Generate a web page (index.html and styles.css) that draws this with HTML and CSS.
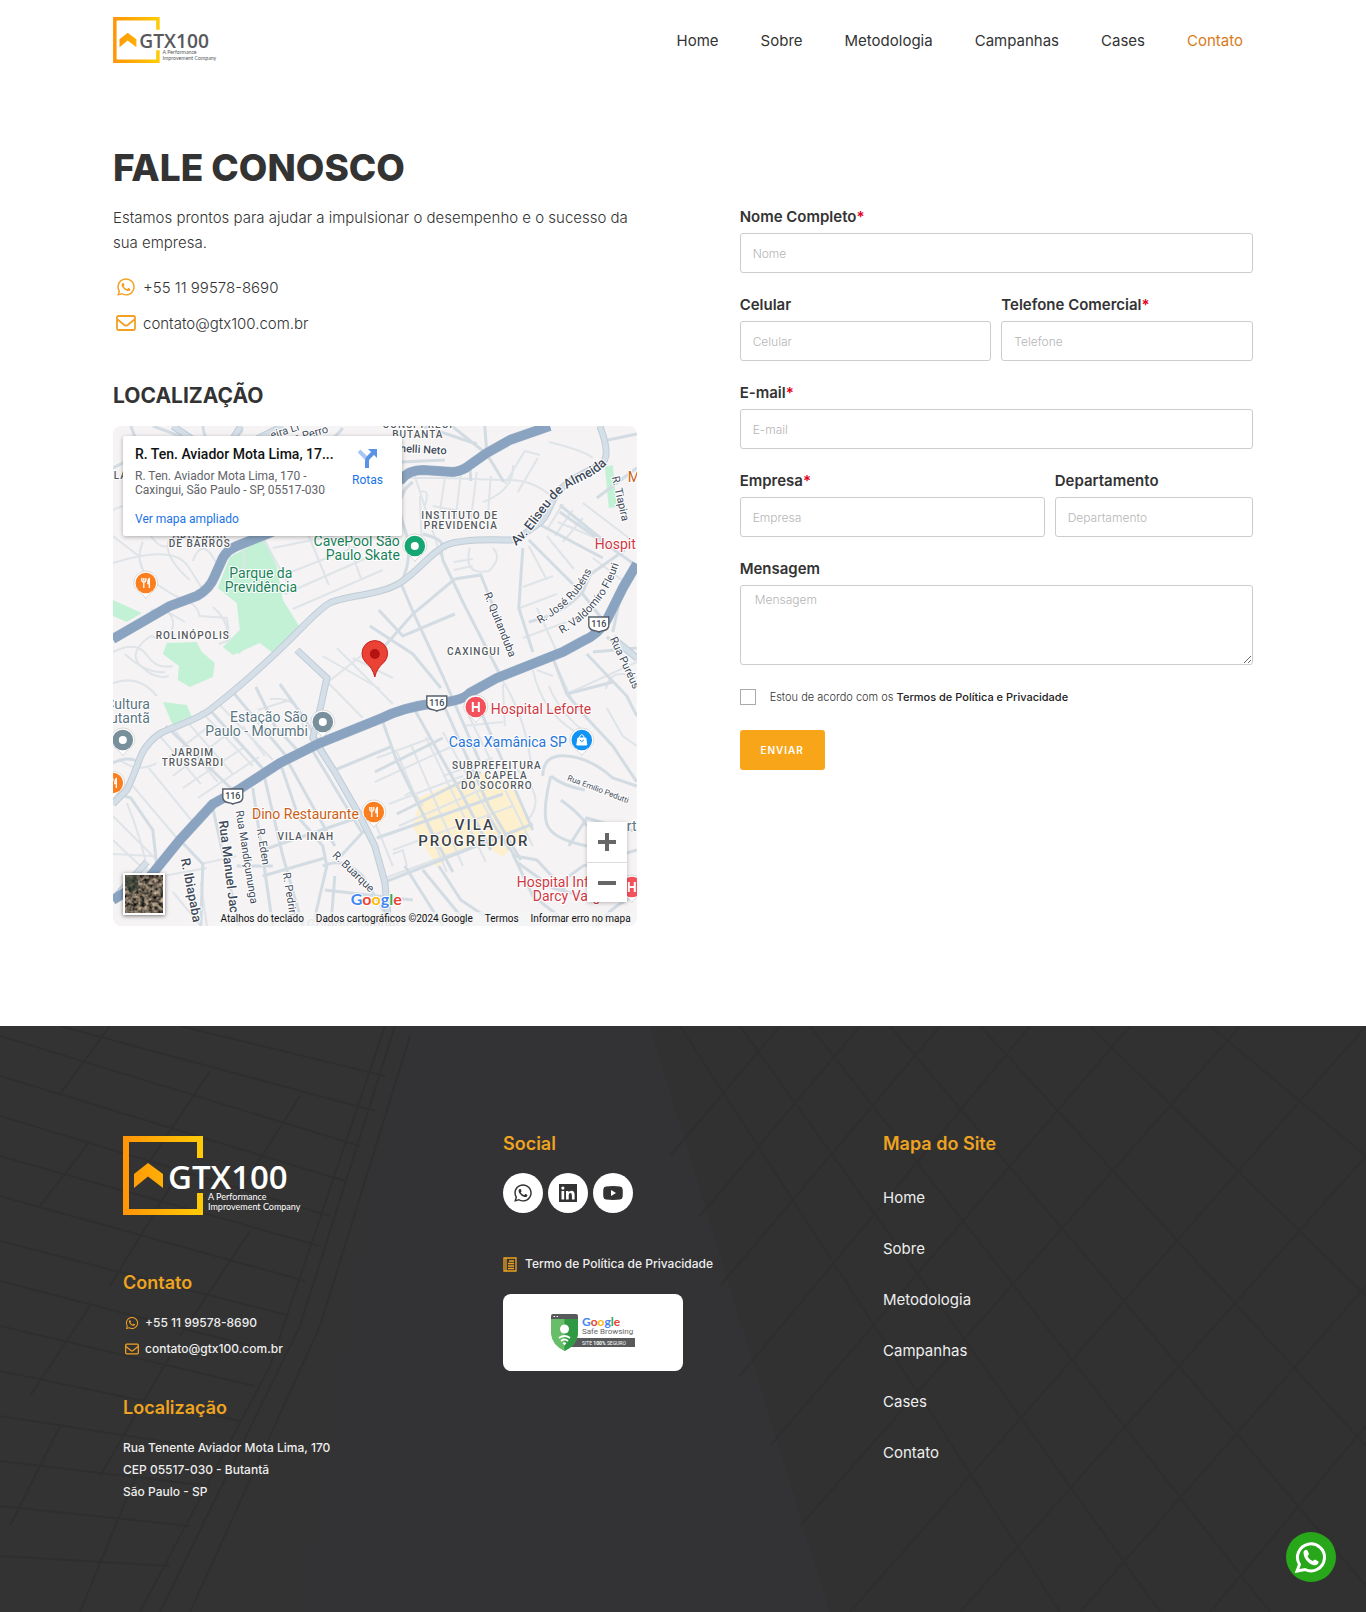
FILE: index.html
```html
<!DOCTYPE html>
<html lang="pt-BR">
<head>
<meta charset="utf-8">
<meta name="viewport" content="width=device-width, initial-scale=1">
<title>Contato | GTX100</title>
<link rel="stylesheet" href="styles.css">
</head>
<body>
<svg class="defs" width="0" height="0" aria-hidden="true">
  <defs>
    <linearGradient id="gold" x1="0" x2="80" y1="0" y2="0" gradientUnits="userSpaceOnUse"><stop offset="0" stop-color="#ff9408"/><stop offset="1" stop-color="#ffcb05"/></linearGradient>
    <symbol id="logo" viewBox="0 0 180 79">
      <path fill="url(#gold)" d="M0 0H80V22H74V6H6V73H74V57H80V79H0Z"/>
      <path fill="url(#gold)" d="M11 38 25 27 40 38V52L25 40.500 11 52Z"/>
      <text class="logo-name" x="45" y="53">GTX100</text>
      <text class="logo-tag" x="85" y="64">A Performance</text>
      <text class="logo-tag" x="85" y="74">Improvement Company</text>
    </symbol>
    <symbol id="whatsapp" viewBox="0 0 448 512"><path fill="currentColor" d="M380.900 97.100C339 55.100 283.200 32 223.900 32c-122.400 0-222 99.600-222 222 0 39.100 10.200 77.300 29.600 111L0 480l117.700-30.900c32.400 17.700 68.900 27 106.100 27h.1c122.300 0 224.100-99.600 224.100-222 0-59.300-25.200-115-67.100-157zm-157 341.600c-33.200 0-65.700-8.900-94-25.700l-6.700-4-69.800 18.300L72 359.200l-4.400-7c-18.500-29.400-28.200-63.300-28.200-98.200 0-101.700 82.800-184.500 184.600-184.500 49.300 0 95.600 19.200 130.400 54.100 34.800 34.900 56.200 81.200 56.100 130.500 0 101.800-84.900 184.600-186.600 184.600zm101.200-138.200c-5.500-2.800-32.800-16.200-37.900-18-5.100-1.900-8.800-2.800-12.500 2.800-3.700 5.600-14.300 18-17.600 21.800-3.200 3.700-6.500 4.200-12 1.400-32.600-16.300-54-29.100-75.500-66-5.700-9.800 5.700-9.100 16.300-30.300 1.800-3.700.9-6.900-.5-9.700-1.400-2.800-12.500-30.100-17.100-41.200-4.500-10.800-9.100-9.300-12.500-9.500-3.200-.2-6.900-.2-10.600-.2-3.700 0-9.700 1.400-14.800 6.900-5.100 5.600-19.400 19-19.400 46.300 0 27.300 19.900 53.700 22.600 57.400 2.800 3.700 39.100 59.700 94.800 83.800 35.200 15.200 49 16.500 66.600 13.900 10.700-1.600 32.800-13.400 37.400-26.400 4.600-13 4.600-24.100 3.200-26.400-1.300-2.500-5-3.900-10.500-6.600z"/></symbol>
    <symbol id="mail" viewBox="0 0 20 16"><rect x="1" y="1" width="18" height="14" rx="1.500" fill="none" stroke="currentColor" stroke-width="1.800"/><path d="M1.500 4.500 8.300 10c1.200.9 2.200.9 3.400 0l6.800-5.500" fill="none" stroke="currentColor" stroke-width="1.800"/></symbol>
    <symbol id="shield" viewBox="0 0 22 17"><path d="M1 1H21V10Q20 14 16 14.500 13 15 11 16 9 15 6 14.500 2 14 1 10Z" fill="#fff" stroke="#555e68" stroke-width="1.400"/><text class="shield-number" x="11" y="11">116</text></symbol>
    <symbol id="pin" viewBox="0 0 26 30"><path d="M13 1a12 12 0 0 1 12 12c0 7-8 9-12 15.500C9 22 1 20 1 13A12 12 0 0 1 13 1Z" fill="#fff" stroke="#bbb" stroke-width=".5"/><circle cx="13" cy="13" r="10.300" fill="currentColor"/></symbol>
    <symbol id="fork" viewBox="0 0 12 12"><path d="M2 1V4M4 1V4M6 1V4M2 4Q4 6.500 6 4M4 5V11M9.500 11V1.500C8 2 8 5 8 6.500H9.500" fill="none" stroke="#fff" stroke-width="1.300"/></symbol>
  </defs>
</svg>

<header class="header">
  <div class="container header-bar">
    <a class="logo-link" href="#" aria-label="GTX100"><svg class="logo logo-small"><use href="#logo"/></svg></a>
    <nav class="nav">
      <a href="#">Home</a><a href="#">Sobre</a><a href="#">Metodologia</a><a href="#">Campanhas</a><a href="#">Cases</a><a class="active" href="#">Contato</a>
    </nav>
  </div>
</header>

<main class="container contact">
  <h1>FALE CONOSCO</h1>
  <section class="info">
    <p>Estamos prontos para ajudar a impulsionar o desempenho e o sucesso da sua empresa.</p>
    <ul class="contact-list">
      <li><svg class="icon"><use href="#whatsapp"/></svg><a href="#">+55 11 99578-8690</a></li>
      <li><svg class="icon"><use href="#mail"/></svg><a href="#">contato@gtx100.com.br</a></li>
    </ul>
    <h2>LOCALIZAÇÃO</h2>
    <div class="map">
      <svg class="map-canvas" viewBox="0 0 524 500" preserveAspectRatio="xMidYMid slice" role="img" aria-label="Mapa">
        <defs>
          <path id="way-eliseu" d="M403 120C426 101 436 74 454 63S482 52 500 32"/>
          <path id="way-jose" d="M427 198C448 186 470 168 480 142"/>
          <path id="way-valdomiro" d="M449 208C477 192 500 166 508 130"/>
        </defs>
        <rect width="524" height="500" fill="#f5f3f4"/>
        <g fill="#c3f1d5">
          <path d="M117 131 152 112 164 141 170 174 187 201 160 227 147 217 120 229 110 221 127 204 124 177 105 162Z"/>
          <path d="M0 174 29 187 14 196 0 190Z"/>
          <path d="M54 217 84 216 89 226 102 237 100 251 77 261 65 254 66 240 50 228Z"/>
          <path d="M50 276 74 279 79 291 60 299Z"/><path d="M118 224 131 222 127 228Z"/>
          <path d="M492 41 500 39 504 81 496 82Z"/>
        </g>
        <path fill="#fdf0cf" d="M307 371 370 346 397 357 420 401 390 431 370 418 347 424 324 441 300 401Z"/>
        <g class="road-thin">
          <path d="M0 84Q30 70 50 82T64 112Q52 130 38 110T14 104M0 137Q60 118 75 140L93 168M30 116Q20 140 40 155T70 173M57 112Q48 128 77 154M80 135Q90 108 105 140M0 110 26 130 34 157"/>
          <path d="M38 184Q62 182 60 200T38 210Q14 226 28 240T56 250M64 177Q82 172 87 190L114 192 117 214 106 218M100 181Q118 196 114 215M52 184 72 196M0 226Q24 214 34 229T60 240M0 257Q26 248 44 270M12 228Q34 248 52 246"/>
          <path d="M121 128Q130 116 132 132T117 142M151 113 179 165M196 110 216 159M232 108 248 152M168 150 245 120M172 168 256 131M180 183 270 144M219 110 260 104M160 122 230 108"/>
          <path d="M300 44 328 130M332 52 326 94M348 48 342 99M364 46 357 103M378 50 374 104M288 52 332 52 388 54Q420 52 440 72M307 66Q318 62 312 80M307 70 309 118M320 80 358 87M357 122Q350 150 376 145 390 132 380 122M341 136 360 133M341 144 360 140M400 39Q402 64 370 76M412 25 392 58M425 32 405 66M412 25 427 29M436 16Q470 24 480 32"/>
          <path d="M416 120 434 154M434 110 461 143M442 75 424 102M450 78 434 104M460 84 442 110M470 92 450 116M445 96 512 124M410 161 440 150M407 182 444 168M424 182 446 230M410 212 470 190M480 132 517 160M470 77 520 115"/>
          <path d="M6 333Q24 348 44 337M47 310 88 358M58 300 105 356M71 292 120 348M88 285 140 340M106 278 160 334M50 336 94 302M60 350 112 310M70 362 130 322M85 372 146 331M20 360 64 412M36 342 80 396M0 390 46 436M0 414 34 446M14 377Q28 410 36 450"/>
          <path d="M157 273Q190 270 190 302M145 284 177 274M210 230 267 263M197 238 250 292M224 222 280 278M214 257 258 222M240 232 280 252M0 428 40 430M50 450 94 442M88 438 124 430M60 466 88 500M88 456 94 500M130 300 152 330"/>
          <path d="M264 332 318 312M262 356 340 320M276 378 350 350M286 400 372 362M280 424 400 380M272 452 410 402M284 326 334 446M298 318 350 440M313 311 373 436M330 306 396 424M356 290 420 420M292 370Q300 360 310 380M280 428 290 424 294 440M262 396 280 440M330 350 380 332M350 300 390 296"/>
          <path d="M420 244Q430 290 470 310M436 260Q448 290 480 312M440 232 460 276M390 255Q412 290 418 336M390 258 392 300M400 340Q436 370 415 394M424 244 440 250M454 268 524 236M493 263Q498 240 524 252M494 282 510 310 524 320"/>
        </g>
        <g class="road">
          <path d="M0 42 20 32 28 18 70 12 102 36 130 4M24 16 18 0M40 0 78 14M90 0Q92 20 112 30M166 0Q150 16 180 22T230 2"/>
          <path d="M339 0 374 28 391 56M310 0 364 18M357 39 358 55M374 28 372 0M289 36 332 34M300 56Q280 70 291 100T288 157M310 108Q334 114 328 122L330 134 352 180 390 254M288 157 302 190 330 250 368 338"/>
          <path d="M342 153 368 149 400 230M342 153 300 188 258 236M257 200 300 228 328 262M266 184 290 210 342 188M410 122 406 182 420 226M416 114 470 168 490 194M424 97 490 132M416 196Q450 188 470 166L478 148 512 124M447 79 490 114M447 86 510 130 524 140M440 72 424 97M484 72 524 42M495 14 524 8M510 160 500 206"/>
          <path d="M0 337Q14 330 24 335M53 300 120 364M97 284 154 347M120 266 176 333M143 261 162 300 190 330M167 258 190 290 224 346M0 366 18 372 40 404 44 440M44 438 70 412M67 414 90 438 88 500M100 382 126 500M140 362 160 500M150 344 170 430 190 500M167 336 186 392 210 420 214 440 200 500"/>
          <path d="M172 330 222 420M200 325 250 408M222 344 280 320M150 424 250 390M150 450 212 432M124 440 160 440M210 440Q230 430 250 450L280 500M218 500 222 450M252 404 228 430M270 296 284 335 320 408 340 446M302 284 350 370 378 424M330 277 376 380 408 434M355 268 370 290 420 404M262 346 330 312M284 388 368 346M264 412 390 368M272 456 420 398M326 440 348 474 372 490"/>
          <path d="M440 232 454 268 474 292 500 320 524 356M454 268 500 256M474 228 514 270 524 290M494 211 524 234M480 226 524 222M430 350Q430 328 454 330T500 352L524 360M438 350Q450 360 472 364M438 350Q428 390 436 402T474 420M448 374Q470 390 474 400M456 420 474 392 520 405M400 428 420 470 446 490M404 436 440 462 470 470M375 390 402 430 424 434 452 464M440 462 470 440 524 424M484 500Q500 478 524 470M292 440 330 500M310 444 356 500M212 464 300 474"/>
        </g>
        <g id="avenues">
          <path class="avenue-edge" d="M487 0C494 18 497 34 487 39S458 52 447 64 436 92 424 99 408 114 397 114 350 112 334 119 306 145 287 157 230 170 217 177 190 202 160 230 110 274 97 284 58 302 50 306 32 320 28 330 20 352 14 364L0 378M184 224 214 252 208 280 200 312 222 346 246 388 262 420 272 456 276 500M108 32 128 0M104 30 60 0M500 212 524 232M130 20 170 0M0 474 34 436"/>
          <path class="avenue" d="M487 0C494 18 497 34 487 39S458 52 447 64 436 92 424 99 408 114 397 114 350 112 334 119 306 145 287 157 230 170 217 177 190 202 160 230 110 274 97 284 58 302 50 306 32 320 28 330 20 352 14 364L0 378M184 224 214 252 208 280 200 312 222 346 246 388 262 420 272 456 276 500M108 32 128 0M104 30 60 0M500 212 524 232M130 20 170 0M0 474 34 436"/>
        </g>
        <g class="highway-edge"><path d="M0 213 57 180 84 170Q97 163 102 150L110 132Q114 124 124 120L154 108 289 53Q296 44 310 44L340 46Q350 45 357 39L374 27 397 14 437 0"/><path d="M0 474 37 451 67 414 100 378 127 363 167 337 207 317 267 293Q290 281 324 277 350 275 357 267L384 252 450 226 470 215Q485 209 494 194L510 162 524 138"/></g>
        <g class="highway"><path d="M0 213 57 180 84 170Q97 163 102 150L110 132Q114 124 124 120L154 108 289 53Q296 44 310 44L340 46Q350 45 357 39L374 27 397 14 437 0"/><path d="M0 474 37 451 67 414 100 378 127 363 167 337 207 317 267 293Q290 281 324 277 350 275 357 267L384 252 450 226 470 215Q485 209 494 194L510 162 524 138"/></g>
        <g class="street">
          <text transform="translate(159 13) rotate(-18)">eira Li</text>
          <text transform="translate(182 16) rotate(-16)">o Perro</text>
          <text class="street-bold" transform="translate(287 26) rotate(3)">nelli Neto</text>
          <text class="street-major"><textPath href="#way-eliseu">Av. Eliseu de Almeida</textPath></text>
          <text><textPath href="#way-jose">R. José Rubéns</textPath></text>
          <text><textPath href="#way-valdomiro">R. Valdomiro Fleuri</textPath></text>
          <text transform="translate(499 51) rotate(77)">R. Tiapira</text>
          <text transform="translate(497 213) rotate(65)">Rua Puréus</text>
          <text transform="translate(371 168) rotate(68)">R. Quitanduba</text>
          <text class="street-major" transform="translate(106 395) rotate(83)">Rua Manuel Jac</text>
          <text transform="translate(123 385) rotate(81)">Rua Mandiçununga</text>
          <text transform="translate(144 403) rotate(81)">R. Eden</text>
          <text class="street-major" transform="translate(68 433) rotate(79)">R. Ibiapaba</text>
          <text transform="translate(170 447) rotate(81)">R. Pedrin</text>
          <text transform="translate(219 430) rotate(44)">R. Buarque</text>
          <text class="street-minor" transform="translate(454 354) rotate(21)">Rua Emilio Pedutti</text>
        </g>
        <g class="district">
          <text x="305" y="2">CONSI PRECI</text><text x="305" y="12">BUTANTA</text>
          <text x="8" y="53">LA</text><text x="87" y="112">ADHEMAR</text><text x="87" y="121">DE BARROS</text>
          <text x="347" y="93">INSTITUTO DE</text><text x="348" y="103">PREVIDENCIA</text>
          <text x="80" y="213">ROLINÓPOLIS</text><text x="361" y="229">CAXINGUI</text>
          <text x="80" y="330">JARDIM</text><text x="80" y="340">TRUSSARDI</text>
          <text x="384" y="343">SUBPREFEITURA</text><text x="384" y="353">DA CAPELA</text><text x="384" y="363">DO SOCORRO</text>
          <text x="193" y="414">VILA INAH</text>
          <text class="district-major" x="362" y="404">VILA</text><text class="district-major" x="361" y="420">PROGREDIOR</text>
        </g>
        <g class="place">
          <g fill="#188159"><text x="148" y="152" text-anchor="middle">Parque da</text><text x="148" y="166" text-anchor="middle">Previdência</text><text x="287" y="120" text-anchor="end">CavePool São</text><text x="287" y="134" text-anchor="end">Paulo Skate</text></g>
          <g fill="#5a7582"><text x="37" y="283" text-anchor="end">Cultura</text><text x="37" y="297" text-anchor="end">Butantã</text><text x="195" y="296" text-anchor="end">Estação São</text><text x="195" y="310" text-anchor="end">Paulo - Morumbi</text><text x="514" y="405">rt</text></g>
          <g fill="#cb6016"><text x="246" y="393" text-anchor="end">Dino Restaurante</text><text x="515" y="56">M</text></g>
          <g fill="#cf3843"><text x="482" y="123">Hospit</text><text x="378" y="288">Hospital Leforte</text><text x="404" y="461">Hospital Inf</text><text x="420" y="475">Darcy Vargas</text></g>
          <text x="454" y="321" text-anchor="end" fill="#2674d8">Casa Xamânica SP</text>
          <text x="240" y="504" text-anchor="middle" fill="#b7bcc3">Colégio Miguel</text>
        </g>
        <use href="#shield" x="475" y="190" width="22" height="17"/><use href="#shield" x="313" y="269" width="22" height="17"/><use href="#shield" x="109" y="362" width="22" height="17"/>
        <g color="#16a673"><use href="#pin" x="289" y="107" width="26" height="30"/></g><circle cx="302" cy="120" r="4" fill="#fff"/>
        <g color="#78909c"><use href="#pin" x="-3" y="301" width="26" height="30"/><use href="#pin" x="197" y="283" width="26" height="30"/></g><circle cx="10" cy="314" r="4" fill="#fff"/><circle cx="210" cy="296" r="4" fill="#fff"/>
        <g color="#fb7f1f"><use href="#pin" x="20" y="144" width="26" height="30"/><use href="#pin" x="-13" y="344" width="26" height="30"/><use href="#pin" x="248" y="373" width="26" height="30"/></g>
        <use href="#fork" x="27" y="151" width="12" height="12"/><use href="#fork" x="-6" y="351" width="12" height="12"/><use href="#fork" x="255" y="380" width="12" height="12"/>
        <g color="#f4515c"><use href="#pin" x="350" y="268" width="26" height="30"/><use href="#pin" x="506" y="448" width="26" height="30"/></g>
        <path d="M360 276V286M366 276V286M360 281H366M516 456V466M522 456V466M516 461H522" stroke="#fff" stroke-width="2"/>
        <g color="#1192f5"><use href="#pin" x="456" y="301" width="26" height="30"/></g><path d="M465 312H473L474 319H464Z" fill="#fff" stroke="#fff"/><path d="M467 312V310Q469 307 471 310V312" fill="none" stroke="#fff"/><path d="M467 314Q469 317 471 314" fill="none" stroke="#1192f5"/>
        <path d="M262 251Q260 242 253 236.500A12.800 12.800 0 1 1 271 236.500Q264 242 262 251Z" fill="#ea4335" stroke="#c5221f"/><circle cx="262" cy="228" r="5" fill="#b31412"/>
        <text class="google" x="238" y="479"><tspan fill="#4285f4">G</tspan><tspan fill="#ea4335">o</tspan><tspan fill="#fbbc05">o</tspan><tspan fill="#4285f4">g</tspan><tspan fill="#34a853">l</tspan><tspan fill="#ea4335">e</tspan></text>
      </svg>
      <div class="map-card">
        <div class="map-address"><strong>R. Ten. Aviador Mota Lima, 17...</strong><span>R. Ten. Aviador Mota Lima, 170 - Caxingui, São Paulo - SP, 05517-030</span><a href="#">Ver mapa ampliado</a></div>
        <a class="routes" href="#"><svg width="20" height="20" viewBox="0 0 20 20"><path d="M1 2 9 10" stroke="#a9c7f4" stroke-width="4"/><path d="M9 19V12Q9 10 11 8L15 4" fill="none" stroke="#5a93e6" stroke-width="4"/><path d="M10 0H19V9L16 6 13 3Z" fill="#5a93e6"/></svg>Rotas</a>
      </div>
      <button class="satellite" type="button" aria-label="Satélite"><svg width="38" height="38"><filter id="terrain" x="0" y="0" width="1" height="1" color-interpolation-filters="sRGB"><feTurbulence type="fractalNoise" baseFrequency=".25" numOctaves="4" seed="8"/><feColorMatrix values="1.200 0 0 0 -.17  1.050 0 0 0 -.14  .9 0 0 0 -.12  0 0 0 0 1"/></filter><rect width="38" height="38" filter="url(#terrain)"/><path d="M0 0H12L14 14 6 18 0 10Z" fill="#29382e" opacity=".6"/></svg></button>
      <div class="map-zoom">
        <button type="button" aria-label="Aumentar"><svg width="18" height="18"><path d="M9 0V18M0 9H18" stroke="#666" stroke-width="4"/></svg></button>
        <button type="button" aria-label="Diminuir"><svg width="18" height="18"><path d="M0 9H18" stroke="#666" stroke-width="4"/></svg></button>
      </div>
      <div class="map-credits"><span>Atalhos do teclado</span><span>Dados cartográficos ©2024 Google</span><a href="#">Termos</a><a href="#">Informar erro no mapa</a></div>
    </div>
  </section>

  <form class="form">
    <div class="field"><label for="nome">Nome Completo<b>*</b></label><input id="nome" type="text" placeholder="Nome"></div>
    <div class="row even">
      <div class="field"><label for="celular">Celular</label><input id="celular" type="tel" placeholder="Celular"></div>
      <div class="field"><label for="telefone">Telefone Comercial<b>*</b></label><input id="telefone" type="tel" placeholder="Telefone"></div>
    </div>
    <div class="field"><label for="email">E-mail<b>*</b></label><input id="email" type="email" placeholder="E-mail"></div>
    <div class="row wide">
      <div class="field"><label for="empresa">Empresa<b>*</b></label><input id="empresa" type="text" placeholder="Empresa"></div>
      <div class="field"><label for="departamento">Departamento</label><input id="departamento" type="text" placeholder="Departamento"></div>
    </div>
    <div class="field"><label for="mensagem">Mensagem</label><textarea id="mensagem" placeholder="Mensagem"></textarea></div>
    <div class="agree"><input id="termos" type="checkbox"><label for="termos">Estou de acordo com os <a href="#">Termos de Política e Privacidade</a></label></div>
    <button class="submit" type="submit">ENVIAR</button>
  </form>
</main>

<footer class="footer">
  <svg class="footer-art" viewBox="0 0 1366 586" preserveAspectRatio="xMidYMid slice" aria-hidden="true">
    <path d="M400 0H650L830 586H300Z" fill="#35353a" opacity=".35"/>
    <g fill="none" stroke="#2b2b2b" stroke-width="2" opacity=".5">
      <path d="M0 10 360 120M0 50 345 155M0 90 330 190M0 130 320 220M0 170 305 255M0 215 290 290M0 255 270 325M0 300 255 360M0 345 240 395M0 390 225 425M0 435 210 460M0 480 190 500M0 530 170 540M60 0 375 85M180 0 385 50"/>
      <path d="M110 0 60 68M210 45 150 135M300 70 230 180M90 115 40 180M180 145 110 260M250 205 180 310M90 280 30 370M170 330 100 450M60 400 10 500M140 440 80 586"/>
      <path d="M395 0 300 300 160 586M385 0 270 340 140 586M410 10 320 300 190 586"/>
      <path d="M680 0 1060 586M740 0 1160 586M810 0 1270 586M890 0 1366 560M980 0 1366 420M1090 0 1366 270M1210 0 1366 130M1366 0 850 586M1366 130 960 586M1366 260 1080 586M1366 400 1210 586M1240 0 800 500M1130 0 770 420M1030 0 740 350M940 0 720 260M860 0 700 190M780 0 670 130"/>
    </g>
    <path d="M650 0H1366V586H830Z" fill="#2d2d2d" opacity=".25"/>
  </svg>
  <div class="container footer-grid">
    <div>
      <a class="footer-logo" href="#" aria-label="GTX100"><svg class="logo logo-large"><use href="#logo"/></svg></a>
      <h3>Contato</h3>
      <ul class="footer-contact">
        <li><svg class="icon"><use href="#whatsapp"/></svg><a href="#">+55 11 99578-8690</a></li>
        <li><svg class="icon"><use href="#mail"/></svg><a href="#">contato@gtx100.com.br</a></li>
      </ul>
      <h3>Localização</h3>
      <address>Rua Tenente Aviador Mota Lima, 170<br>CEP 05517-030 - Butantã<br>São Paulo - SP</address>
    </div>
    <div>
      <h3>Social</h3>
      <div class="social">
        <a href="#" aria-label="WhatsApp"><svg width="18" height="20"><use href="#whatsapp"/></svg></a>
        <a href="#" aria-label="LinkedIn"><svg width="18" height="18" viewBox="0 0 18 18"><path fill="#333" d="M0 0H18V18H0Z"/><path fill="#fff" d="M2.500 7H5.200V15.500H2.500ZM7 7H9.500V8.200Q10.500 6.700 12.300 6.700C15 6.700 15.600 8.400 15.600 11V15.500H12.900V11.400Q12.900 9.100 11.400 9.100 9.700 9.100 9.700 11.300V15.500H7Z"/><circle cx="3.850" cy="4.100" r="1.600" fill="#fff"/></svg></a>
        <a href="#" aria-label="YouTube"><svg width="20" height="14" viewBox="0 0 20 14"><path fill="#333" d="M3 .4Q10-.3 17 .4 19.400.6 19.600 3 20 7 19.600 11 19.400 13.400 17 13.600 10 14.300 3 13.600.6 13.400.4 11 0 7 .4 3 .6.600 3 .4Z"/><path fill="#fff" d="M8 4 13 7 8 10Z"/></svg></a>
      </div>
      <a class="policy" href="#"><svg width="14" height="15" viewBox="0 0 14 15"><path d="M1 1H13V14H1ZM3 1V14M6 4H11M5 6.500H11M5 9H11M5 11.500H11" fill="none" stroke="currentColor" stroke-width="1.300"/></svg>Termo de Política de Privacidade</a>
      <a class="safe" href="#">
        <svg width="84" height="38" viewBox="0 0 84 38"><path d="M18 24H84V33H18Z" fill="#58595b"/><path d="M0 5H27V20Q26 31 13.500 37 1 31 0 20Z" fill="#67bd68"/><path d="M13.500 5H27V20Q26 31 13.500 37Z" fill="#2f9a43"/><path d="M0 5V2Q0 0 2 0H25Q27 0 27 2V5Z" fill="#58595b"/><path d="M2.500 2.500H4M5.500 2.500H7" stroke="#fff"/><circle cx="13.500" cy="15" r="4.500" fill="#fff"/><path d="M8 24Q13.500 20 19 24M10 27Q13.500 24 17 27" fill="none" stroke="#fff" stroke-width="1.800"/><path d="M11.500 29Q13.500 27.500 15.500 29L13.500 31.500Z" fill="#fff"/><text class="safe-google" x="31" y="12"><tspan fill="#4285f4">G</tspan><tspan fill="#ea4335">o</tspan><tspan fill="#fbbc05">o</tspan><tspan fill="#4285f4">g</tspan><tspan fill="#34a853">l</tspan><tspan fill="#ea4335">e</tspan></text><text class="safe-name" x="31" y="20">Safe Browsing</text><text class="safe-note" x="31" y="31">SITE <tspan font-weight="700">100%</tspan> SEGURO</text></svg>
      </a>
    </div>
    <div>
      <h3>Mapa do Site</h3>
      <nav class="site-map"><a href="#">Home</a><a href="#">Sobre</a><a href="#">Metodologia</a><a href="#">Campanhas</a><a href="#">Cases</a><a href="#">Contato</a></nav>
    </div>
  </div>
</footer>
<a class="float-chat" href="#" aria-label="Fale pelo WhatsApp"><svg viewBox="0 0 32 32" width="32" height="32"><path d="M2 30 4.500 23.500A13.500 13.500 0 1 1 10 28.500Z" fill="none" stroke="#fff" stroke-width="3"/><path d="M8.500 11.500C9 8.500 11.500 8 12.500 9.500L14 13 12.500 15.500Q14 18.500 17.500 20L20 18.500 23.500 20.500C24 23.500 20.500 25 18 24 13 22.500 8.500 17 8.500 11.500Z" fill="#fff"/></svg></a>
</body>
</html>
```
FILE: styles.css
```css
* { box-sizing: border-box; }
body { margin: 0; background: #fff; color: #333; font-family: Inter, "Open Sans", sans-serif; font-size: 15px; }
a { color: inherit; text-decoration: none; }
ul { margin: 0; padding: 0; list-style: none; }
button { padding: 0; border: 0; font-family: inherit; cursor: pointer; }
svg { display: block; }
.defs { position: absolute; }
.container { width: 100%; max-width: 1140px; margin: 0 auto; }

.header-bar { display: flex; align-items: center; justify-content: space-between; min-height: 80px; padding-right: 10px; }
.nav { display: flex; gap: 42px; }
.nav .active { color: #d97b1c; }
.logo-small { width: 105px; height: 46px; color: #58595b; }
.logo-large { width: 180px; height: 79px; color: #fff; }
.logo-name { font: 600 33px "Open Sans", sans-serif; fill: currentColor; }
.logo-tag { font: 400 9px Lato, sans-serif; fill: currentColor; }

.contact { display: grid; grid-template-columns: 51fr 50fr; column-gap: 103px; padding: 66px 0 100px; }
h1 { grid-column: 1 / -1; margin: 0 0 15px; font-size: 37px; font-weight: 800; line-height: 44px; }
h2 { margin: 49px 0 18px; font-size: 21px; font-weight: 700; line-height: 24px; }
.info p { margin: 0; font-weight: 300; line-height: 25px; }
.contact-list { display: grid; gap: 12px; margin-top: 20px; font-weight: 300; }
.contact-list li { display: flex; align-items: center; gap: 7px; height: 24px; padding-left: 3px; }
.icon { width: 20px; height: 20px; color: #f2a123; }

.map { position: relative; height: 500px; overflow: hidden; border-radius: 8px; font-family: Roboto, sans-serif; }
.map-canvas { width: 100%; height: 100%; font-family: Roboto, sans-serif; }
.road-thin { fill: none; stroke: #dfe4e8; stroke-width: 2; }
.road { fill: none; stroke: #d3dce3; stroke-width: 3; }
.avenue { fill: none; stroke: #d5dfe8; stroke-width: 5; }
.avenue-edge { fill: none; stroke: #c0ccd6; stroke-width: 7; }
.highway { fill: none; stroke: #89a3c0; stroke-width: 9; }
.highway-edge { fill: none; stroke: #a3b6cb; stroke-width: 10; }
.street { font-size: 11px; fill: #3f4b5b; stroke: #fff; stroke-width: 2px; paint-order: stroke; }
.street-bold { font-weight: 500; }
.street-major { font-size: 13px; font-weight: 500; }
.street-minor { font-size: 8px; }
.district { font-size: 10px; font-weight: 500; letter-spacing: 1px; fill: #555a60; stroke: #fff; stroke-width: 2px; paint-order: stroke; text-anchor: middle; }
.district-major { font-size: 15px; letter-spacing: 2px; fill: #3c4146; }
.place { font-size: 14px; stroke: #fff; stroke-width: 2px; paint-order: stroke; }
.shield-number { font: 500 9px Roboto, sans-serif; text-anchor: middle; fill: #3c4650; }
.google { font: 700 16px Lato, sans-serif; stroke: #fff; stroke-width: 2px; paint-order: stroke; }
.map-card { position: absolute; top: 10px; left: 10px; display: flex; justify-content: space-between; width: 279px; height: 100px; padding: 10px 19px 0 12px; background: #fff; border-radius: 2px; box-shadow: 0 1px 4px rgba(0, 0, 0, .3); font-size: 12px; line-height: 14px; }
.map-address { display: flex; flex-direction: column; width: 200px; }
.map-address strong { font-size: 14px; font-weight: 500; line-height: 16px; color: #111; white-space: nowrap; }
.map-address span { margin-top: 7px; color: #5f6368; }
.map-address a { margin-top: 15px; color: #1a73e8; }
.routes { display: flex; flex-direction: column; align-items: center; gap: 4px; padding-top: 3px; color: #1a73e8; }
.satellite { position: absolute; left: 10px; bottom: 11px; border: 2px solid #fff; box-shadow: 0 1px 4px rgba(0, 0, 0, .5); }
.map-zoom { position: absolute; right: 10px; bottom: 24px; display: grid; width: 40px; background: #fff; box-shadow: 0 1px 4px rgba(0, 0, 0, .25); }
.map-zoom button { display: grid; place-items: center; height: 40px; background: none; }
.map-zoom button + button { border-top: 1px solid #ddd; }
.map-credits { position: absolute; right: 0; bottom: 0; display: flex; gap: 12px; padding: 0 6px; background: rgba(245, 245, 245, .7); color: #111; font-size: 10px; line-height: 14px; }

.form { display: flex; flex-direction: column; align-items: stretch; }
.row { display: grid; gap: 10px; }
.even { grid-template-columns: 1fr 1fr; }
.wide { grid-template-columns: 20fr 13fr; }
.field { display: flex; flex-direction: column; gap: 4px; min-width: 0; margin-bottom: 20px; }
.field label { font-size: 15px; font-weight: 600; line-height: 24px; }
.field b { color: #e3001b; font-weight: 600; }
.field input, .field textarea { width: 100%; height: 40px; padding: 0 12px; border: 1px solid #ccc; border-radius: 3px; background: #fff; font-family: inherit; font-size: 12px; font-weight: 300; }
.field textarea { display: block; height: 80px; padding: 6px 14px; }
::placeholder { color: #b5b5b5; opacity: 1; }
.agree { display: flex; align-items: center; gap: 14px; margin: 4px 0 25px; font-size: 11px; font-weight: 300; line-height: 16px; }
.agree input { appearance: none; width: 16px; height: 16px; margin: 0; border: 1px solid #aaa; background: #fff; }
.agree a { font-weight: 500; color: #222; }
.submit { align-self: flex-start; width: 85px; height: 40px; border-radius: 3px; background: #f9a51a; color: #fff; font-size: 10px; font-weight: 600; letter-spacing: 1px; }

.footer { position: relative; padding: 106px 0 109px; overflow: hidden; background: #333; color: #eee; }
.footer-art { position: absolute; inset: 0; width: 100%; height: 100%; }
.footer-grid { position: relative; display: grid; grid-template-columns: repeat(3, 1fr); }
.footer-grid > div { padding: 0 10px; }
.footer h3 { margin: 0; color: #eea320; font-size: 18px; font-weight: 600; line-height: 24px; }
.footer-logo { display: block; margin: 4px 0 56px; }
.footer-contact { margin: 15px 0 34px; font-size: 12px; font-weight: 500; line-height: 26px; }
.footer-contact li { display: flex; align-items: center; gap: 6px; padding-left: 2px; }
.footer-contact .icon { width: 14px; height: 14px; }
address { margin-top: 17px; font-size: 12px; font-style: normal; font-weight: 500; line-height: 22px; }
.social { display: flex; gap: 5px; margin-top: 17px; }
.social a { display: grid; place-items: center; width: 40px; height: 40px; border-radius: 50%; background: #fff; color: #333; }
.policy { display: flex; align-items: center; gap: 8px; margin: 41px 0 20px; font-size: 12px; font-weight: 500; line-height: 20px; }
.policy svg { color: #eea320; }
.safe { display: grid; place-items: center; width: 180px; height: 77px; border-radius: 8px; background: #fff; }
.safe-google { font: 700 12px Lato, sans-serif; }
.safe-name { font: 400 8px Roboto, sans-serif; fill: #666; }
.safe-note { font: 400 5px Roboto, sans-serif; fill: #fff; }
.site-map { display: grid; margin-top: 16px; font-size: 15px; font-weight: 400; line-height: 51px; }
.float-chat { position: fixed; right: 30px; bottom: 30px; display: grid; place-items: center; width: 50px; height: 50px; border-radius: 50%; background: #28a71a; }
```
